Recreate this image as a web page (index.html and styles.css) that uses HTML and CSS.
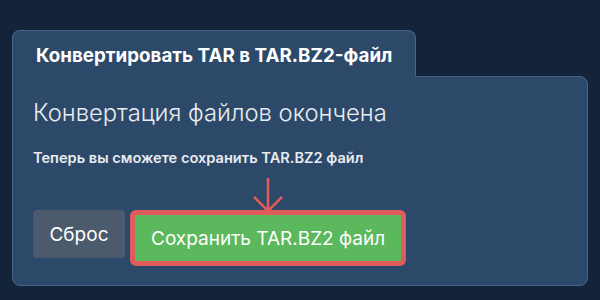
FILE: index.html
```html
<!doctype html>
<html lang="ru">
<head>
<meta charset="utf-8" />
<title>Конвертировать TAR в TAR.BZ2</title>
<link rel="stylesheet" href="styles.css">
</head>
<body>

<section class="converter">
	<h3 class="tab">Конвертировать TAR в TAR.BZ2-файл</h3>
	<div class="card">
		<h2>Конвертация файлов окончена</h2>
		<p>Теперь вы сможете сохранить TAR.BZ2 файл</p>
		<div class="actions">
			<button class="btn reset">Сброс</button>
			<button class="btn save">
				<svg class="arrow" width="32" height="36" viewBox="0 0 32 36">
					<path d="M16 1 V34 M2 20 L16 34 L30 20" fill="none" stroke="#e05c5c" stroke-width="2.6" />
				</svg>
				Сохранить TAR.BZ2 файл
			</button>
		</div>
	</div>
</section>

</body>
</html>
```

FILE: styles.css
```css
:root {
	background-color: #12233a;
	color: #e8ebef;
	font-family: Inter, "Noto Sans", sans-serif;
}

body {
	margin: 0;
	padding: 30px 12px 0;
}

.converter {
	display: flex;
	flex-direction: column;
	align-items: flex-start;
}

.tab {
	position: relative;
	z-index: 1;
	margin: 0 0 -1px;
	padding: 13px 23px 10px;
	font-size: 18.8px;
	font-weight: 700;
	line-height: 23px;
	color: #fff;
	background: #2d4969;
	border: 1px solid #4a6486;
	border-bottom: 0;
	border-radius: 8px 8px 0 0;
}

.card {
	align-self: stretch;
	background: #2d4969;
	border: 1px solid #4a6486;
	border-radius: 0 8px 8px 8px;
	padding: 21px 20px 19px;
}

h2 {
	margin: 0;
	font-size: 23.8px;
	font-weight: 300;
	line-height: 30px;
	color: #e9ecf0;
}

p {
	margin: 21px 0 0;
	font-size: 14.6px;
	font-weight: 600;
	line-height: 18px;
}

.actions {
	display: flex;
	align-items: flex-start;
	gap: 5px;
	margin-top: 43px;
}

.btn {
	font-family: inherit;
	color: #fff;
	border: 0;
	cursor: pointer;
}

.reset {
	width: 92px;
	height: 48px;
	padding: 0;
	font-size: 19px;
	background: #4b5a6c;
	border-radius: 4px;
}

.save {
	position: relative;
	height: 56px;
	padding: 0 16px;
	font-size: 19px;
	background: #5cb85c;
	border: 5px solid #e05c5c;
	border-radius: 6px;
}

.arrow {
	position: absolute;
	left: 50%;
	bottom: 100%;
	margin-left: -16px;
	margin-bottom: 2px;
}
```
